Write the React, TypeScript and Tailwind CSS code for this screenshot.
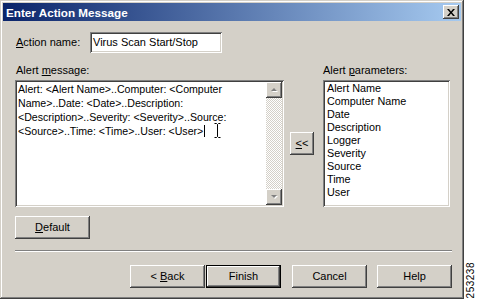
import React from 'react';

const raised =
  'bg-[#d4d0c8] shadow-[inset_-1px_-1px_0_#404040,inset_1px_1px_0_#ffffff,inset_-2px_-2px_0_#808080,inset_2px_2px_0_#d4d0c8]';
const sunken =
  'bg-white shadow-[inset_1px_1px_0_#808080,inset_-1px_-1px_0_#ffffff,inset_2px_2px_0_#404040,inset_-2px_-2px_0_#d4d0c8]';

function Btn({ children, isDefault = false, className = '' }: { children: React.ReactNode; isDefault?: boolean; className?: string }) {
  return (
    <div className={`h-[23px] ${isDefault ? 'border border-black' : ''} ${className}`}>
      <div className={`${raised} w-full h-full flex items-center justify-center text-black`}>{children}</div>
    </div>
  );
}

function ScrollArrow({ up }: { up: boolean }) {
  return (
    <div className={`${raised} w-[16px] h-[16px] flex items-center justify-center`}>
      <svg width="7" height="4" viewBox="0 0 7 4">
        {up ? (
          <>
            <path d="M1 4h6L4 1z" fill="#ffffff" />
            <path d="M0 3h6L3 0z" fill="#808080" />
          </>
        ) : (
          <>
            <path d="M1 1h6L4 4z" fill="#ffffff" />
            <path d="M0 0h6L3 3z" fill="#808080" />
          </>
        )}
      </svg>
    </div>
  );
}

const params = ['Alert Name', 'Computer Name', 'Date', 'Description', 'Logger', 'Severity', 'Source', 'Time', 'User'];

export default function App() {
  return (
    <div className="flex w-[477px] h-[300px] bg-white font-['Liberation_Sans',Arial,sans-serif] text-[11px] text-black leading-[13px]">
      {/* dialog window */}
      <div className="w-[464px] h-[299px] flex flex-col p-[3px] bg-[#d4d0c8] shadow-[inset_-1px_-1px_0_#404040,inset_1px_1px_0_#d4d0c8,inset_-2px_-2px_0_#808080,inset_2px_2px_0_#ffffff]">
        {/* title bar */}
        <div className="h-[18px] flex items-center justify-between bg-[linear-gradient(to_right,#0a246a,#a6caf0)] pl-[3px] pr-[2px]">
          <span className="text-white font-bold text-[11.7px]">Enter Action Message</span>
          <div className={`${raised} w-[16px] h-[14px] flex items-center justify-center`}>
            <svg width="8" height="7" viewBox="0 0 8 7">
              <path d="M0 0h2l2 2.5L6 0h2L5 3.5 8 7H6L4 4.5 2 7H0l3-3.5z" fill="#000" />
            </svg>
          </div>
        </div>

        <div className="flex flex-col pl-[12px] pr-[8px]">
          {/* action name */}
          <div className="flex items-center mt-[11px] h-[21px]">
            <span className="w-[75px] pl-[1px]">
              <span className="underline">A</span>ction name:
            </span>
            <div className={`${sunken} w-[132px] h-[21px] flex items-center pl-[3px]`}>Virus Scan Start/Stop</div>
          </div>

          {/* message + parameters */}
          <div className="flex mt-[11px]">
            <div className="flex flex-col w-[269px]">
              <span className="pl-[1px] h-[13px]">
                Alert <span className="underline">m</span>essage:
              </span>
              <div className={`${sunken} mt-[3px] h-[127px] flex p-[2px]`}>
                <div className="flex-1 pl-[1px] leading-[14px] text-[10.6px] relative">
                  <div>Alert: &lt;Alert Name&gt;..Computer: &lt;Computer</div>
                  <div>Name&gt;..Date: &lt;Date&gt;..Description:</div>
                  <div>&lt;Description&gt;..Severity: &lt;Severity&gt;..Source:</div>
                  <div className="flex items-center">
                    &lt;Source&gt;..Time: &lt;Time&gt;..User: &lt;User&gt;
                    <span className="inline-block w-[1px] h-[12px] bg-black ml-[1px]" />
                  </div>
                  <svg className="absolute left-[197px] top-[41px]" width="7" height="15" viewBox="0 0 7 15">
                    <path d="M0.5 0.5h2l1 1 1-1h2M3.5 1.5v12M0.5 14.5h2l1-1 1 1h2" stroke="#000" fill="none" strokeWidth="1" />
                  </svg>
                </div>
                <div className="w-[16px] flex flex-col bg-[repeating-conic-gradient(#ffffff_0_25%,#d4d0c8_0_50%)] bg-[length:2px_2px]">
                  <ScrollArrow up />
                  <div className="flex-1" />
                  <ScrollArrow up={false} />
                </div>
              </div>
            </div>

            <div className="ml-[6px] mt-[68px]">
              <Btn className="w-[24px] h-[22px]">
                <span>
                  <span className="underline">&lt;</span>&lt;
                </span>
              </Btn>
            </div>

            <div className="flex flex-col ml-[9px] w-[127px]">
              <span className="h-[13px]">
                Alert <span className="underline">p</span>arameters:
              </span>
              <div className={`${sunken} mt-[3px] h-[127px] p-[2px] pl-[4px] text-[10.8px]`}>
                {params.map((p) => (
                  <div key={p} className="h-[13px]">
                    {p}
                  </div>
                ))}
              </div>
            </div>
          </div>

          {/* default */}
          <Btn className="w-[75px] mt-[9px]">
            <span>
              <span className="underline">D</span>efault
            </span>
          </Btn>

          {/* separator */}
          <div className="mt-[11px] w-[437px] h-[2px] border-t border-[#808080] border-b border-b-white" />

          {/* wizard buttons */}
          <div className="flex justify-end w-[437px] mt-[13px]">
            <Btn className="w-[75px]">
              <span>
                &lt; <span className="underline">B</span>ack
              </span>
            </Btn>
            <Btn isDefault className="w-[75px] ml-[1px]">
              Finish
            </Btn>
            <Btn className="w-[75px] ml-[11px]">Cancel</Btn>
            <Btn className="w-[75px] ml-[10px]">Help</Btn>
          </div>
        </div>
      </div>

      {/* figure number strip */}
      <div className="flex-1 flex items-end justify-center pb-[2px]">
        <span className="[writing-mode:vertical-rl] rotate-180 text-[10px] leading-[10px] tracking-[0.5px]">253238</span>
      </div>
    </div>
  );
}
